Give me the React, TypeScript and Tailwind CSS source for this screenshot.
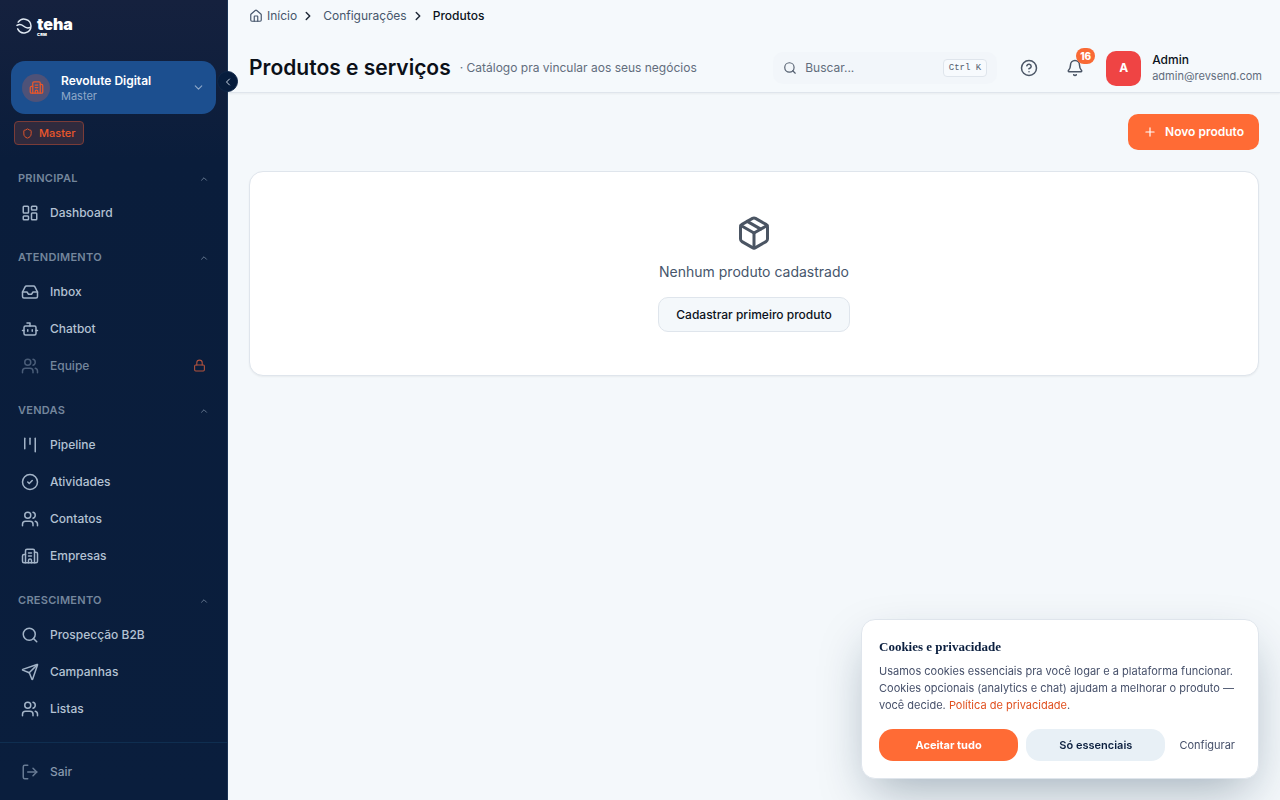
import { useState } from "react";
import {
  Bell,
  Bot,
  Building2,
  ChevronDown,
  ChevronLeft,
  ChevronRight,
  ChevronUp,
  CircleCheck,
  CircleQuestionMark,
  House,
  Inbox,
  Kanban,
  LayoutDashboard,
  Lock,
  LogOut,
  Package,
  Plus,
  Search,
  Send,
  Shield,
  Users,
  type LucideIcon,
} from "lucide-react";

type NavItem = { label: string; icon: LucideIcon; locked?: boolean };
type NavGroup = { title: string; items: NavItem[] };

const groups: NavGroup[] = [
  { title: "PRINCIPAL", items: [{ label: "Dashboard", icon: LayoutDashboard }] },
  {
    title: "ATENDIMENTO",
    items: [
      { label: "Inbox", icon: Inbox },
      { label: "Chatbot", icon: Bot },
      { label: "Equipe", icon: Users, locked: true },
    ],
  },
  {
    title: "VENDAS",
    items: [
      { label: "Pipeline", icon: Kanban },
      { label: "Atividades", icon: CircleCheck },
      { label: "Contatos", icon: Users },
      { label: "Empresas", icon: Building2 },
    ],
  },
  {
    title: "CRESCIMENTO",
    items: [
      { label: "Prospecção B2B", icon: Search },
      { label: "Campanhas", icon: Send },
      { label: "Listas", icon: Users },
    ],
  },
];

function Logo() {
  return (
    <a href="#" aria-label="teha CRM" className="flex items-start gap-[5px] text-white">
      <svg width="16" height="16" viewBox="0 0 16 16" fill="none" stroke="currentColor" strokeWidth="1.5" strokeLinecap="round" className="mt-0.5 text-[#dfe8f2]">
        <path d="M2.200 4.200A7 7 0 0 1 15 8a7 7 0 0 1-13.300 2.900" />
        <path d="M1 7.400c2.200-1.500 4.400-1.200 6.400.6s4.200 2.600 6.800 1.400" />
      </svg>
      <span className="flex flex-col">
        <span className="text-[16px] leading-[17px] font-black">teha</span>
        <span className="text-[4px] leading-[4px] font-black tracking-wider">CRM</span>
      </span>
    </a>
  );
}

function Group({ title, items }: NavGroup) {
  const [open, setOpen] = useState(true);
  return (
    <section className="pb-4">
      <button
        type="button"
        aria-expanded={open}
        onClick={() => setOpen(!open)}
        className="flex h-[26px] w-full items-center justify-between pr-2 pl-2 pb-[5px] text-[11px] font-semibold tracking-wide text-[#74869c]"
      >
        {title}
        <ChevronUp size={10} strokeWidth={2} />
      </button>
      {open && (
        <ul>
          {items.map(({ label, icon: Icon, locked }) => (
            <li key={label}>
              <a
                href="#"
                className={`flex h-[37px] items-center gap-[11px] pr-[11px] pl-[11px] text-[12px] font-medium ${locked ? "text-[#74869c]" : "text-[#b4c2d3]"}`}
              >
                <Icon size={18} strokeWidth={2} className={locked ? "text-[#4a5d78]" : "text-[#a3b4c8]"} />
                <span className="flex-1">{label}</span>
                {locked && <Lock size={13} strokeWidth={2} className="text-[#b1523d]" />}
              </a>
            </li>
          ))}
        </ul>
      )}
    </section>
  );
}

function Sidebar() {
  return (
    <aside className="relative flex w-[228px] shrink-0 flex-col border-r border-[#1b3354] bg-linear-to-b from-[#15213e] via-[#0a1d3b] via-20% to-[#0a1e3d]">
      <div className="px-4 pt-4">
        <Logo />
      </div>
      <div className="px-[11px] pt-6">
        <button type="button" className="flex h-[53px] w-full items-center rounded-[14px] bg-[#1c4f8f] px-[11px] text-left">
          <span className="flex size-7 items-center justify-center rounded-full bg-[#4e5278] text-[#e9572b]">
            <Building2 size={15} strokeWidth={2} />
          </span>
          <span className="ml-[11px] flex-1">
            <span className="block text-[12px] leading-[17px] font-semibold text-white">Revolute Digital</span>
            <span className="block text-[11px] leading-[14px] text-[#8fa9c9]">Master</span>
          </span>
          <ChevronDown size={13} strokeWidth={2} className="text-[#8fa9c9]" />
        </button>
      </div>
      <div className="flex px-3.5 pt-[7px]">
        <span className="flex h-6 items-center gap-1.5 rounded-[4px] border border-[#7a3c38] bg-[#302a3d] px-[7px] text-[11px] font-medium text-[#e9572b]">
          <Shield size={11} strokeWidth={2} />
          Master
        </span>
      </div>
      <nav className="flex-1 overflow-hidden px-2.5 pt-[23px]" aria-label="Menu">
        {groups.map((g) => (
          <Group key={g.title} {...g} />
        ))}
      </nav>
      <div className="border-t border-[#0f2e50] px-2.5 py-[10px]">
        <a href="#" className="flex h-[37px] items-center gap-[11px] px-[11px] text-[12px] font-medium text-[#8798ad]">
          <LogOut size={18} strokeWidth={2} className="text-[#687b94]" />
          Sair
        </a>
      </div>
      <button
        type="button"
        aria-label="Recolher menu"
        className="absolute top-[71px] -right-[11px] z-10 flex size-[21px] items-center justify-center rounded-full border border-[#0f2748] bg-[#071d3d] text-[#c9d5e3]"
      >
        <ChevronLeft size={12} strokeWidth={2} />
      </button>
    </aside>
  );
}

function Header() {
  return (
    <header className="border-b border-[#dfe5ec] bg-[#f5f9fc] pr-[18px] pl-[21px] shadow-xs">
      <nav aria-label="Trilha" className="flex h-8 items-center text-[12px] text-[#46566b]">
        <a href="#" className="flex items-center gap-1">
          <House size={14} strokeWidth={2} />
          Início
        </a>
        <ChevronRight size={14} strokeWidth={2.5} className="mx-1 text-[#1f2937]" />
        <a href="#" className="ml-1">Configurações</a>
        <ChevronRight size={14} strokeWidth={2.5} className="mx-1 text-[#1f2937]" />
        <span aria-current="page" className="ml-1 font-medium text-[#0b1220]">Produtos</span>
      </nav>
      <div className="flex h-[60px] items-center">
        <div className="flex flex-1 items-center gap-[9px] pt-3 whitespace-nowrap">
          <h1 className="text-[21px] leading-7 font-semibold text-[#0b1018]">Produtos e serviços</h1>
          <p className="text-[12px] text-[#626d7c]">· Catálogo pra vincular aos seus negócios</p>
        </div>
        <div className="flex items-center pt-3">
          <label className="mr-4 flex h-8 w-56 items-center rounded-[10px] bg-[#f2f6fa] pr-2.5 pl-2.5">
            <Search size={14} strokeWidth={2} className="shrink-0 text-[#556070]" />
            <input type="text" aria-label="Buscar" placeholder="Buscar..." className="ml-2 w-full min-w-0 bg-transparent text-[12px] outline-none placeholder:text-[#626d7c]" />
            <kbd className="shrink-0 rounded-[4px] border border-[#dfe5ec] bg-[#f7fafd] px-[5px] font-['Liberation_Mono',monospace] text-[9px] leading-4 text-[#556070]">Ctrl K</kbd>
          </label>
          <button type="button" aria-label="Ajuda" className="flex size-8 items-center justify-center text-[#4b5666]">
            <CircleQuestionMark size={18} strokeWidth={2} />
          </button>
          <button type="button" aria-label="Notificações" className="relative ml-3.5 flex size-8 items-center justify-center text-[#4b5666]">
            <Bell size={18} strokeWidth={2} />
            <span className="absolute -top-1 right-[-4px] flex h-4 items-center rounded-full bg-[#f96a35] px-1 text-[10px] font-extrabold text-white">16</span>
          </button>
          <button type="button" className="ml-[15px] flex items-center gap-[11px] text-left">
            <span className="flex size-[35px] items-center justify-center rounded-[10px] bg-[#ef4444] text-[12px] font-bold text-white">A</span>
            <span>
              <span className="block text-[12px] leading-4 font-medium text-[#0b1220]">Admin</span>
              <span className="block text-[11px] leading-4 text-[#626d7c]">admin@revsend.com</span>
            </span>
          </button>
        </div>
      </div>
    </header>
  );
}

function CookieNotice() {
  return (
    <section
      aria-label="Cookies e privacidade"
      className="fixed right-[21px] bottom-[21px] w-[398px] rounded-[14px] border border-[#dfe5ec] bg-white px-[17px] pt-[18px] pb-[17px] shadow-[0_20px_50px_-10px_rgba(10,40,65,0.35)]"
    >
      <h2 className="font-['Liberation_Serif',serif] text-[13px] leading-[18px] font-bold text-[#0b1f3f]">Cookies e privacidade</h2>
      <p className="mt-[7px] text-[11px] leading-[17px] text-[#46506a]">
        Usamos cookies essenciais pra você logar e a plataforma funcionar. Cookies opcionais (analytics e chat) ajudam a melhorar o produto — você decide.{" "}
        <a href="#" className="text-[#e0501f]">Política de privacidade</a>.
      </p>
      <div className="mt-[15px] flex h-8 items-stretch gap-2 text-[11px]">
        <button type="button" className="flex-1 rounded-[14px] bg-[#ff6b35] font-bold text-white">Aceitar tudo</button>
        <button type="button" className="flex-1 rounded-[14px] bg-[#e8f0f6] font-semibold text-[#0b1f3f]">Só essenciais</button>
        <button type="button" className="px-1.5 text-[#46506a]">Configurar</button>
      </div>
    </section>
  );
}

export default function App() {
  return (
    <div className="flex h-screen bg-[#f4f8fb] font-['Inter',sans-serif]">
      <Sidebar />
      <div className="flex min-w-0 flex-1 flex-col">
        <Header />
        <main className="flex-1 p-[21px]">
          <div className="flex justify-end">
            <button type="button" className="flex h-9 items-center gap-2 rounded-[10px] bg-[#ff6b35] px-[15px] text-[12px] font-semibold text-white">
              <Plus size={14} strokeWidth={2} />
              Novo produto
            </button>
          </div>
          <section className="mt-[21px] flex flex-col items-center rounded-[14px] border border-[#dfe5ec] bg-white px-6 py-[43px] shadow-xs">
            <Package size={36} strokeWidth={2} className="text-[#4b5563]" />
            <p className="mt-2.5 text-[14px] leading-[22px] text-[#46566b]">Nenhum produto cadastrado</p>
            <button type="button" className="mt-3.5 h-[35px] rounded-[10px] border border-[#dfe5ec] bg-[#f4f8fb] px-[17px] text-[12px] font-medium text-[#0b1220]">
              Cadastrar primeiro produto
            </button>
          </section>
        </main>
      </div>
      <CookieNotice />
    </div>
  );
}
